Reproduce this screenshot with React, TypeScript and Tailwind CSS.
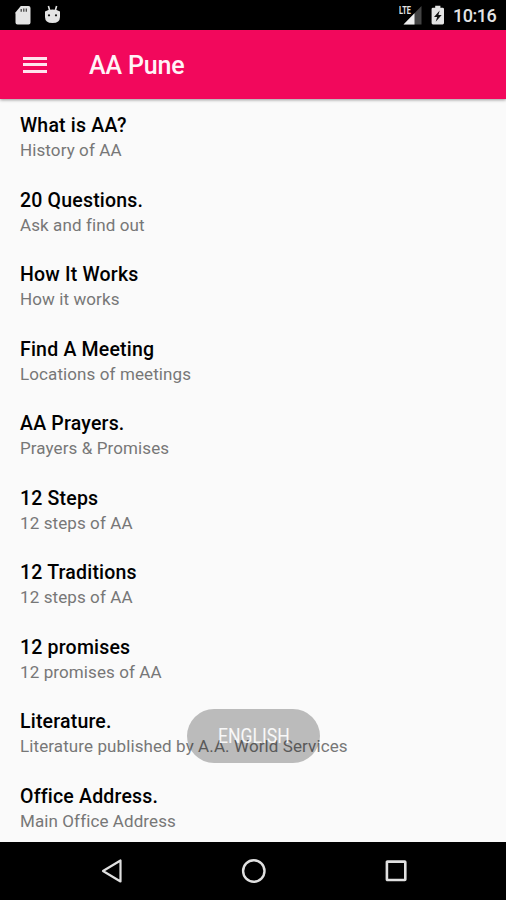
import React from "react";

type ItemType = {
  title: string;
  subtitle: string;
};

const items: ItemType[] = [
  { title: "What is AA?", subtitle: "History of AA" },
  { title: "20 Questions.", subtitle: "Ask and find out" },
  { title: "How It Works", subtitle: "How it works" },
  { title: "Find A Meeting", subtitle: "Locations of meetings" },
  { title: "AA Prayers.", subtitle: "Prayers & Promises" },
  { title: "12 Steps", subtitle: "12 steps of AA" },
  { title: "12 Traditions", subtitle: "12 steps of AA" },
  { title: "12 promises", subtitle: "12 promises of AA" },
  { title: "Literature.", subtitle: "Literature published by A.A. World Services" },
  { title: "Office Address.", subtitle: "Main Office Address" },
];

const StatusBar = () => (
  <div className="flex h-[30px] shrink-0 items-center bg-black pl-[14px] pr-[9px] text-[#e4e4e4]">
    <svg width="17" height="20" viewBox="0 0 17 20" fill="currentColor">
      <path d="M6.8 1h7.7q2 0 2 2v14.5q0 2-2 2h-11q-2 0-2-2V8.5L1 8z" />
      <path d="M7.2 4v2.8M9.8 3.4v3.4M12.3 3.4v3.4" stroke="#444" strokeWidth="1.3" />
    </svg>
    <svg className="ml-[13px]" width="17" height="20" viewBox="0 0 17 20" fill="currentColor">
      <path d="M4.4 1l1.3 4.5M12.6 1l-1.3 4.5" stroke="currentColor" strokeWidth="1.6" />
      <path d="M1 6.5Q4 4.5 8.5 4.5T16 6.5V12q0 6-7.5 6T1 12z" />
      <circle cx="5" cy="10.3" r="1.1" fill="#111" />
      <circle cx="12" cy="10.3" r="1.1" fill="#111" />
    </svg>
    <div className="relative ml-auto h-5 w-6">
      <svg width="24" height="20" viewBox="0 0 24 20">
        <path d="M22.5 1v18.5h-18z" fill="#444" />
        <path d="M15.5 8.2v11.3h-11z" fill="#eee" />
        <path d="M0 0h13.5v10H0z" fill="#000" />
      </svg>
      <span className="absolute left-0 top-[1px] origin-left scale-x-[0.7] text-[10.5px] font-bold leading-[10px]">
        LTE
      </span>
    </div>
    <svg className="ml-[8px]" width="14" height="20" viewBox="0 0 14 20" fill="currentColor">
      <path d="M4.2.7h5.2v2h2.2q1.4 0 1.4 1.4v14q0 1.4-1.4 1.4H2q-1.4 0-1.4-1.4v-14Q.6 2.7 2 2.7h2.2z" />
      <path d="M8.7 5.5L3 12h3.2l-1.5 4.8 6-6.8H7.4z" fill="#111" />
    </svg>
    <span className="ml-[8px] w-[44px] whitespace-nowrap pt-[2px] text-[18px] font-medium leading-6 tracking-[-0.5px]">
      10:16
    </span>
  </div>
);

const Header = () => (
  <header className="z-10 flex h-[69px] shrink-0 items-center bg-[#f2085c] pl-[23px] shadow-[0_1px_3px_rgba(0,0,0,0.4)]">
    <button className="flex flex-col gap-[3.5px]" aria-label="Menu">
      <span className="h-[3px] w-6 bg-[#ffe4ee]" />
      <span className="h-[3px] w-6 bg-[#ffe4ee]" />
      <span className="h-[3px] w-6 bg-[#ffe4ee]" />
    </button>
    <h1 className="ml-[42px] pt-[3px] text-[25px] font-medium leading-8 tracking-[-0.15px] text-[#fff3f7]">
      AA Pune
    </h1>
  </header>
);

const ListItem = ({ item }: { item: ItemType }) => (
  <li className="h-[74.55px] whitespace-nowrap pl-5 pt-[3px]">
    <p className="text-[19.5px] font-medium leading-[24px] tracking-[0.2px] text-black">{item.title}</p>
    <p className="text-[17px] leading-[24px] tracking-[0.1px] text-[#777]">{item.subtitle}</p>
  </li>
);

const NavBar = () => (
  <nav className="z-10 flex h-[58px] shrink-0 items-center bg-black pl-[100px] text-[#e0e0e0]">
    <svg width="24" height="26" viewBox="0 0 24 26" fill="none" stroke="currentColor" strokeWidth="2.2">
      <path d="M20.5 2.5v21L3 13z" strokeLinejoin="round" />
    </svg>
    <svg className="ml-[117px]" width="26" height="26" viewBox="0 0 26 26" fill="none" stroke="currentColor" strokeWidth="2.4">
      <circle cx="12.8" cy="13" r="10.7" />
    </svg>
    <svg className="ml-[117px]" width="24" height="26" viewBox="0 0 24 26" fill="none" stroke="currentColor" strokeWidth="2.6">
      <rect x="2.9" y="3.6" width="18.4" height="18.4" rx="0.5" />
    </svg>
  </nav>
);

const App = () => {
  return (
    <div className="relative flex h-[900px] w-[506px] flex-col overflow-hidden bg-[#fafafa] font-['Roboto',sans-serif]">
      <StatusBar />
      <Header />
      <ul className="min-h-0 flex-1 overflow-hidden pt-[12px]">
        {items.map((item) => (
          <ListItem key={item.title} item={item} />
        ))}
      </ul>
      <NavBar />
      <div className="absolute left-[187px] top-[709px] flex h-[54px] w-[133px] items-center justify-center rounded-full bg-black/25">
        <span className="scale-x-[0.88] text-[20px] leading-6 text-white/90">ENGLISH</span>
      </div>
    </div>
  );
};

export default App;
